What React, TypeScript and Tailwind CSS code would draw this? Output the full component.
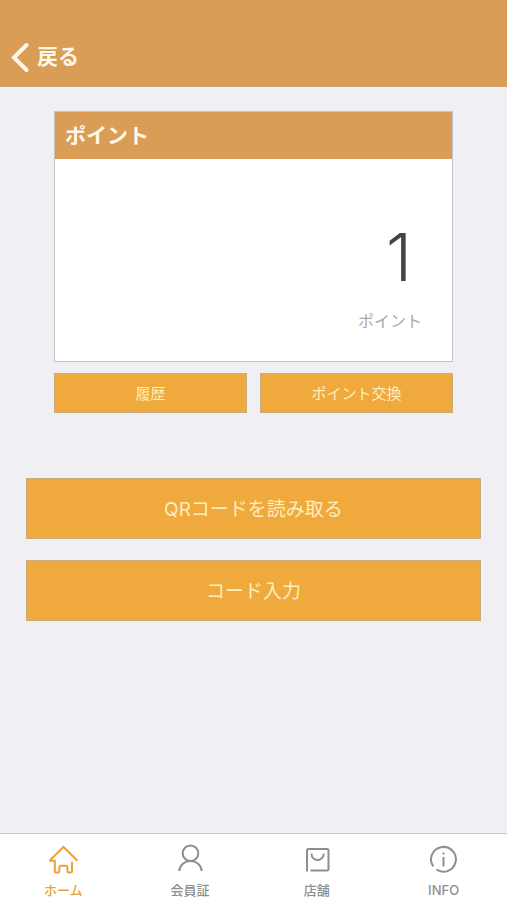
import React, { useState } from 'react';

const HomeIcon = () => (
  <path d="M2.5 17.8L16.5 4L30.5 17.8M2.5 17.8H7.8V28Q7.8 29.5 9.3 29.5H10.9Q12.4 29.5 12.4 28V24.2Q12.4 22.7 13.9 22.7H18.9Q20.4 22.7 20.4 24.2V28Q20.4 29.5 21.9 29.5H23.5Q25 29.5 25 28V18.8" />
);

const MemberIcon = () => (
  <>
    <circle cx="16.5" cy="10.3" r="7.8" />
    <path d="M5.3 28C5.8 22 10.6 18.1 16.5 18.1S27.2 22 27.7 28" />
  </>
);

const ShopIcon = () => (
  <>
    <path d="M6 28.5V7.5Q6 6 7.5 6H26Q27.5 6 27.5 7.5V26Q27.5 27.5 26 27.5H9.5" />
    <path d="M10.5 10.5C10.5 19 22.7 19 22.7 10.5" />
  </>
);

const InfoIcon = () => (
  <>
    <path d="M5.3 23.4A12.4 12.4 0 1 1 8.4 26.5" />
    <path d="M15.5 14V23.5" />
    <path d="M15.5 9.5V11.5" />
  </>
);

const tabs = [
  { id: 'home', label: 'ホーム', icon: <HomeIcon /> },
  { id: 'member', label: '会員証', icon: <MemberIcon /> },
  { id: 'shop', label: '店舗', icon: <ShopIcon /> },
  { id: 'info', label: 'INFO', icon: <InfoIcon /> },
];

export default function App() {
  const [active, setActive] = useState('home');

  return (
    <div className="flex min-h-screen flex-col bg-[#efeff4] font-['Inter','Noto_Sans_CJK_JP',sans-serif]">
      <header className="border-b border-[#cfa470] bg-[#d99d55] px-[11px] pt-8 pb-1">
        <button className="flex h-[50px] items-center gap-2 text-[21px] font-bold text-[#fff8e8]">
          <svg className="h-8 w-[18px]" viewBox="0 0 18 32" fill="none" stroke="currentColor" strokeWidth="4" strokeLinecap="round">
            <path d="M15.5 4L3 16.5L15.5 29" />
          </svg>
          戻る
        </button>
      </header>

      <main className="flex-1 px-[26px] pt-6">
        <div className="px-7">
          <section className="border border-[#c4c4c8] bg-white">
            <h1 className="flex h-[47px] items-center bg-[#d99d55] px-2.5 text-[21px] font-bold text-[#fff8e8]">ポイント</h1>
            <div className="px-[30px] pt-[62px] pb-7 text-right">
              <p className="pr-2.5 text-[66px] leading-[72px] font-light text-[#444444]">1</p>
              <p className="mt-4 text-base leading-6 text-[#aaaaaa]">ポイント</p>
            </div>
          </section>

          <div className="mt-[11px] grid grid-cols-2 gap-[13px]">
            <button className="h-10 border border-[#c9ab7c] bg-[#f0a93c] pt-0.5 text-[15px] text-[#ffedbe]">履歴</button>
            <button className="h-10 border border-[#c9ab7c] bg-[#f0a93c] pt-0.5 text-[15px] text-[#ffedbe]">ポイント交換</button>
          </div>
        </div>

        <div className="mt-[65px] flex flex-col gap-[21px]">
          <button className="h-[61px] border border-[#c9ab7c] bg-[#f0a93c] pt-1 text-[19px] text-[#ffedbe]">QRコードを読み取る</button>
          <button className="h-[61px] border border-[#c9ab7c] bg-[#f0a93c] pt-1 text-[19px] text-[#ffedbe]">コード入力</button>
        </div>
      </main>

      <nav className="grid grid-cols-4 border-t border-[#c8c8cc] bg-white pt-[9px]">
        {tabs.map((tab) => (
          <button
            key={tab.id}
            onClick={() => setActive(tab.id)}
            className={`flex flex-col items-center gap-[5px] text-[13px] leading-5 font-medium ${active === tab.id ? 'text-[#eba23a]' : 'text-[#8e8e8e]'}`}
          >
            <svg className="h-8 w-8" viewBox="0 0 32 32" fill="none" stroke="currentColor" strokeWidth="2">
              {tab.icon}
            </svg>
            {tab.label}
          </button>
        ))}
      </nav>
    </div>
  );
}
